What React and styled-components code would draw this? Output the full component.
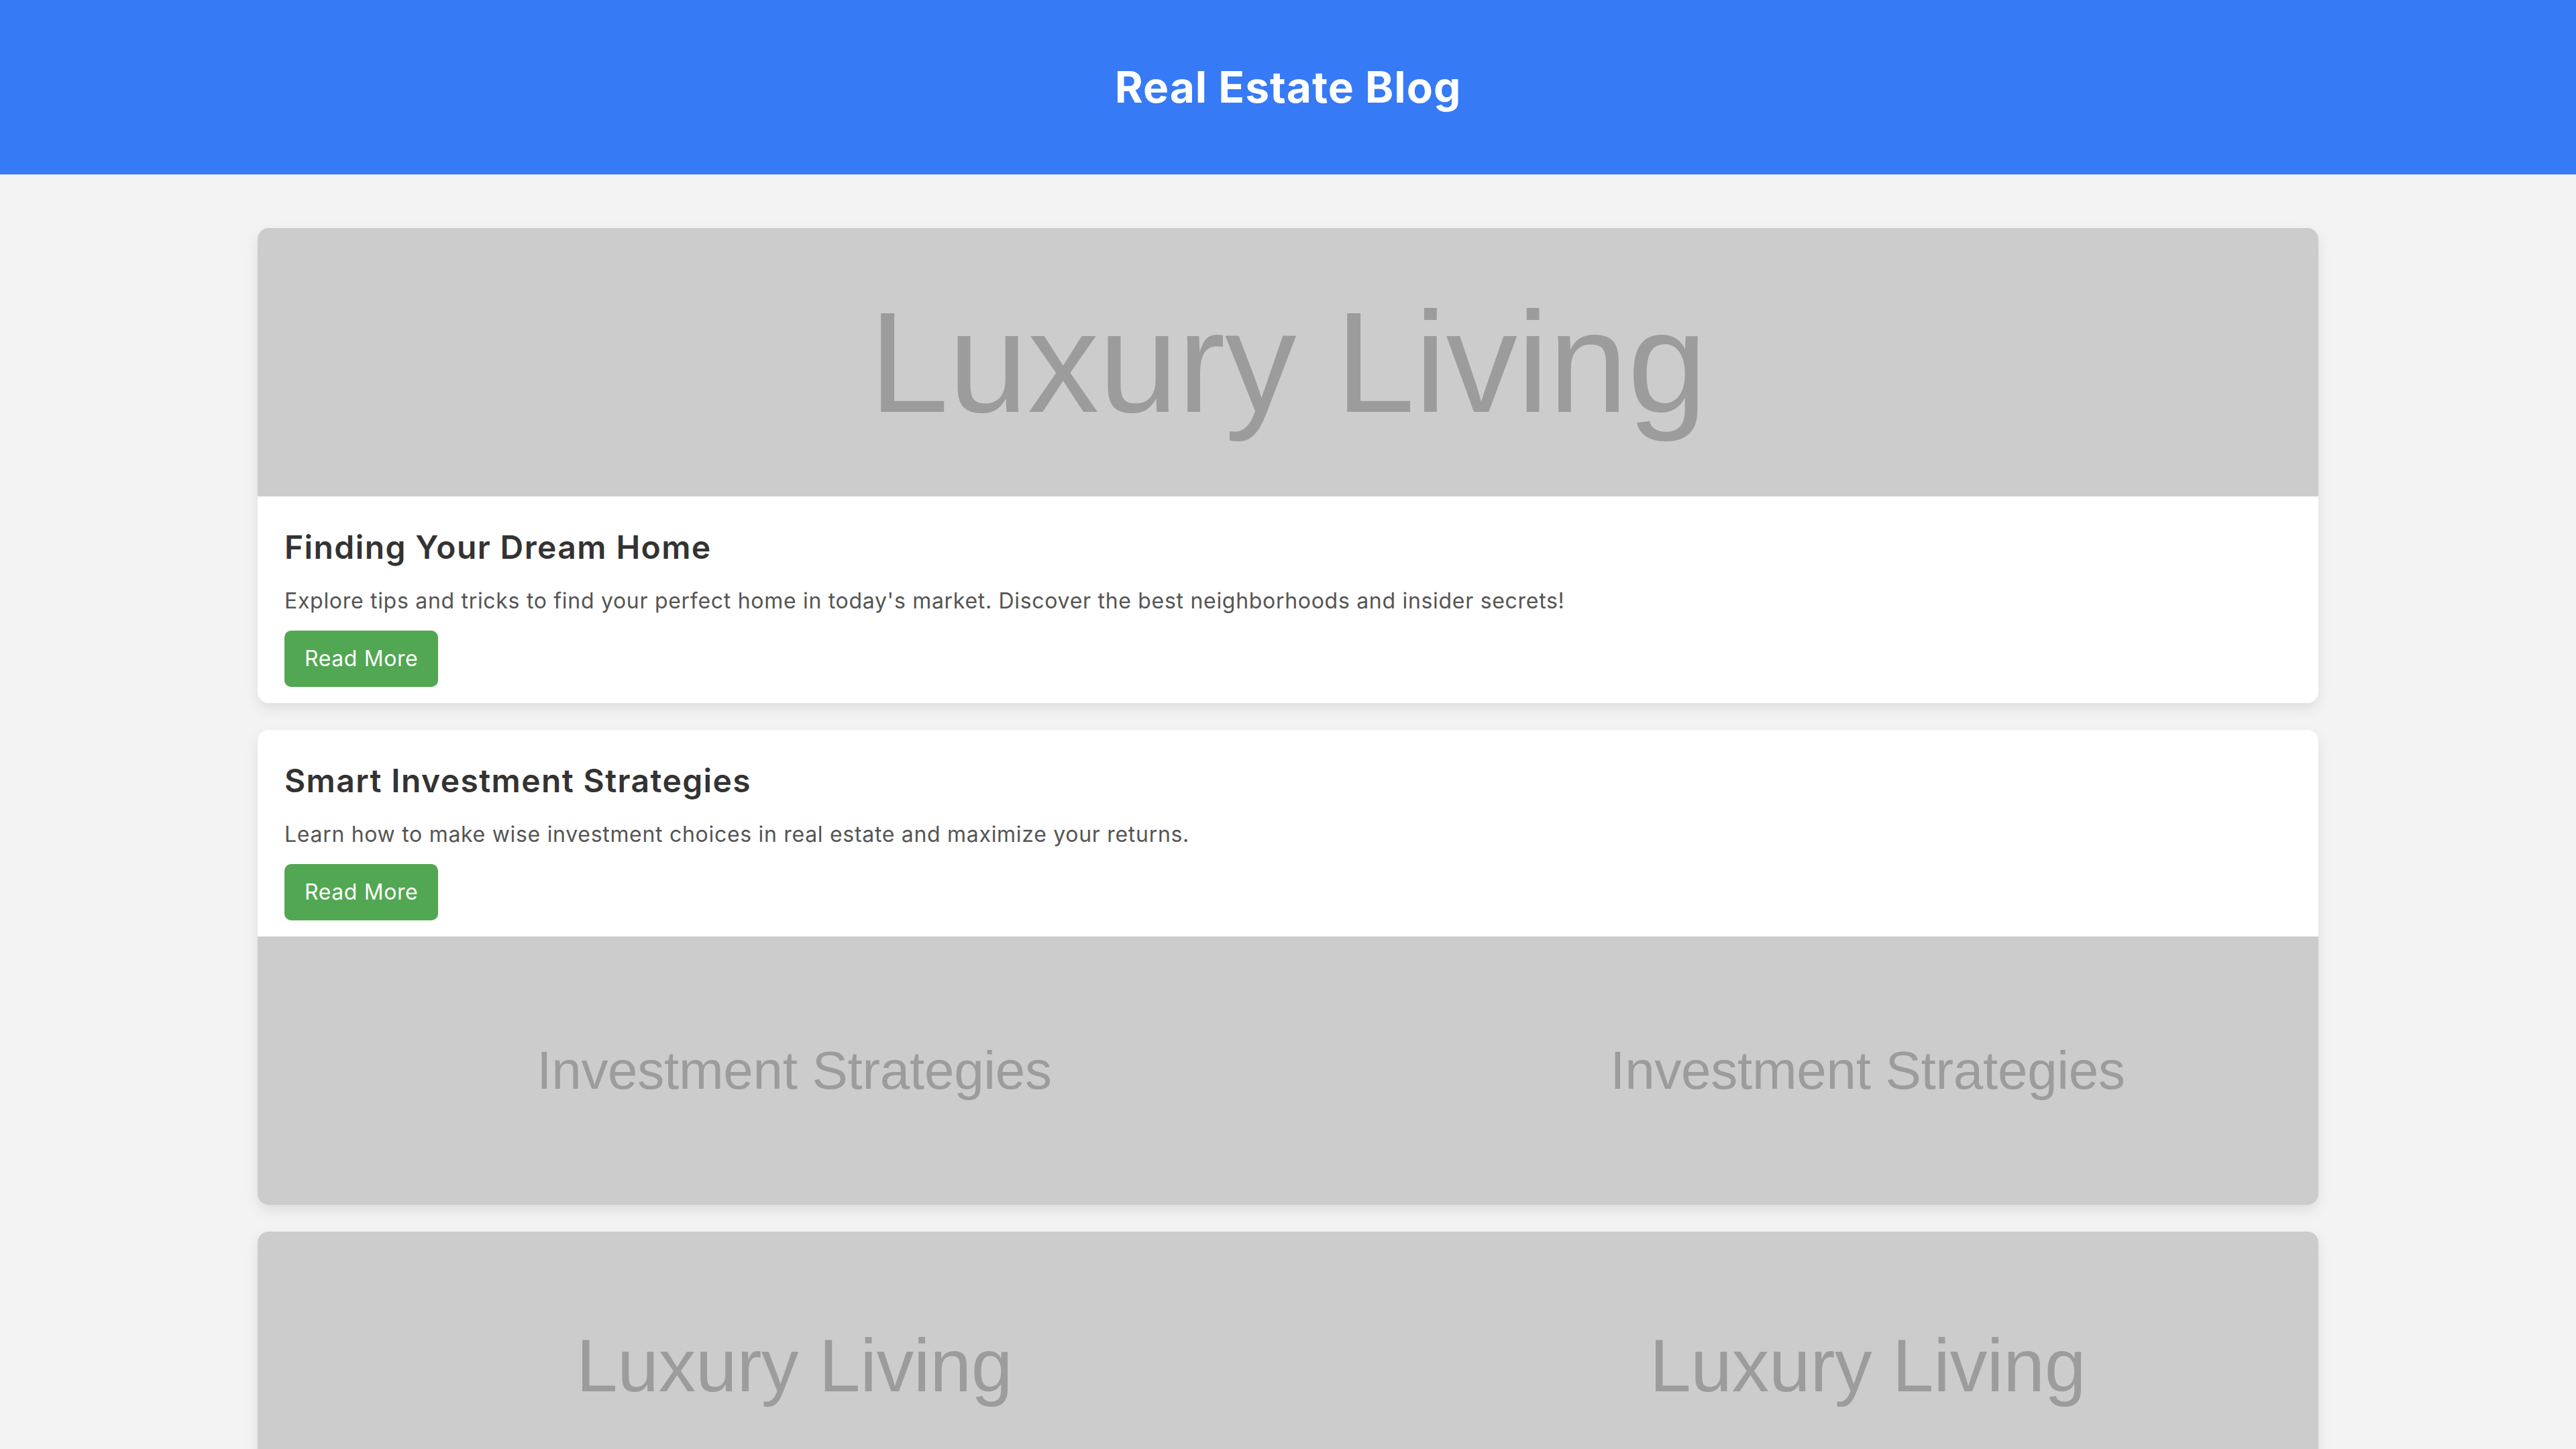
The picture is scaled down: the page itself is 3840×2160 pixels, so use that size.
import React from 'react';
import styled, { createGlobalStyle } from 'styled-components';

const GlobalStyle = createGlobalStyle`
    * {
        box-sizing: border-box;
    }
    body {
        margin: 0;
        background: #f3f3f3;
        font-family: Inter, 'Open Sans', sans-serif;
        color: #333;
    }
`;

const Header = styled.header`
    display: flex;
    align-items: center;
    justify-content: center;
    height: 260px;
    background: #367af6;
`;

const SiteTitle = styled.h1`
    margin: 0;
    color: #fff;
    font-size: 64px;
    font-weight: 700;
    line-height: 96px;
    letter-spacing: 1px;
`;

const Main = styled.main`
    display: flex;
    flex-direction: column;
    gap: 40px;
    width: 3072px;
    margin: 0 auto;
    padding: 80px 0;
`;

const Card = styled.article`
    display: flex;
    flex-direction: column;
    background: #fff;
    border-radius: 16px;
    overflow: hidden;
    box-shadow: 0 8px 20px rgba(0, 0, 0, 0.09);
`;

const Banner = styled.div`
    display: flex;
    align-items: center;
    justify-content: ${props => (props.$tiled ? 'flex-start' : 'center')};
    height: 400px;
    background: #ccc;
    overflow: hidden;
`;

const Tile = styled.div`
    flex: 0 0 1600px;
    display: flex;
    align-items: center;
    justify-content: center;
    height: 400px;
`;

const BannerText = styled.span`
    font-family: 'Liberation Sans', Arial, sans-serif;
    color: #9c9c9c;
    white-space: nowrap;
    font-size: ${props => props.$size}px;
    letter-spacing: ${props => props.$spacing}px;
    line-height: 1;
`;

const Body = styled.div`
    padding: 40px 40px 24px;
`;

const PostTitle = styled.h2`
    margin: 0 0 20px;
    font-size: 48px;
    font-weight: 600;
    line-height: 72px;
    letter-spacing: 1.4px;
    color: #333;
`;

const Excerpt = styled.p`
    margin: 0 0 20px;
    font-size: 32px;
    line-height: 48px;
    letter-spacing: 0.7px;
    color: #555;
`;

const ReadMore = styled.button`
    display: block;
    height: 84px;
    padding: 0 30px;
    border: none;
    border-radius: 10px;
    background: #52a752;
    color: #fff;
    font-family: inherit;
    font-size: 32px;
    line-height: 48px;
    letter-spacing: 0.6px;
    cursor: pointer;
`;

const posts = [
    {
        title: 'Finding Your Dream Home',
        text: "Explore tips and tricks to find your perfect home in today's market. Discover the best neighborhoods and insider secrets!",
        label: 'Luxury Living',
        banner: 'cover',
        position: 'top',
    },
    {
        title: 'Smart Investment Strategies',
        text: 'Learn how to make wise investment choices in real estate and maximize your returns.',
        label: 'Investment Strategies',
        banner: 'tiled',
        position: 'bottom',
        size: 80,
        spacing: -0.3,
    },
    {
        title: 'Luxury Living Trends',
        text: 'Discover the latest trends in luxury real estate and what buyers are looking for today.',
        label: 'Luxury Living',
        banner: 'tiled',
        position: 'top',
        size: 111,
        spacing: -0.3,
    },
];

const PostBanner = ({ post }) => {
    if (post.banner === 'cover') {
        return (
            <Banner>
                <BannerText $size={213} $spacing={-0.5}>{post.label}</BannerText>
            </Banner>
        );
    }
    return (
        <Banner $tiled>
            {[0, 1].map(i => (
                <Tile key={i}>
                    <BannerText $size={post.size} $spacing={post.spacing}>{post.label}</BannerText>
                </Tile>
            ))}
        </Banner>
    );
};

const App = () => {
    return (
        <>
            <GlobalStyle />
            <Header>
                <SiteTitle>Real Estate Blog</SiteTitle>
            </Header>
            <Main>
                {posts.map((post, index) => (
                    <Card key={index}>
                        {post.position === 'top' && <PostBanner post={post} />}
                        <Body>
                            <PostTitle>{post.title}</PostTitle>
                            <Excerpt>{post.text}</Excerpt>
                            <ReadMore>Read More</ReadMore>
                        </Body>
                        {post.position === 'bottom' && <PostBanner post={post} />}
                    </Card>
                ))}
            </Main>
        </>
    );
};

export default App;
